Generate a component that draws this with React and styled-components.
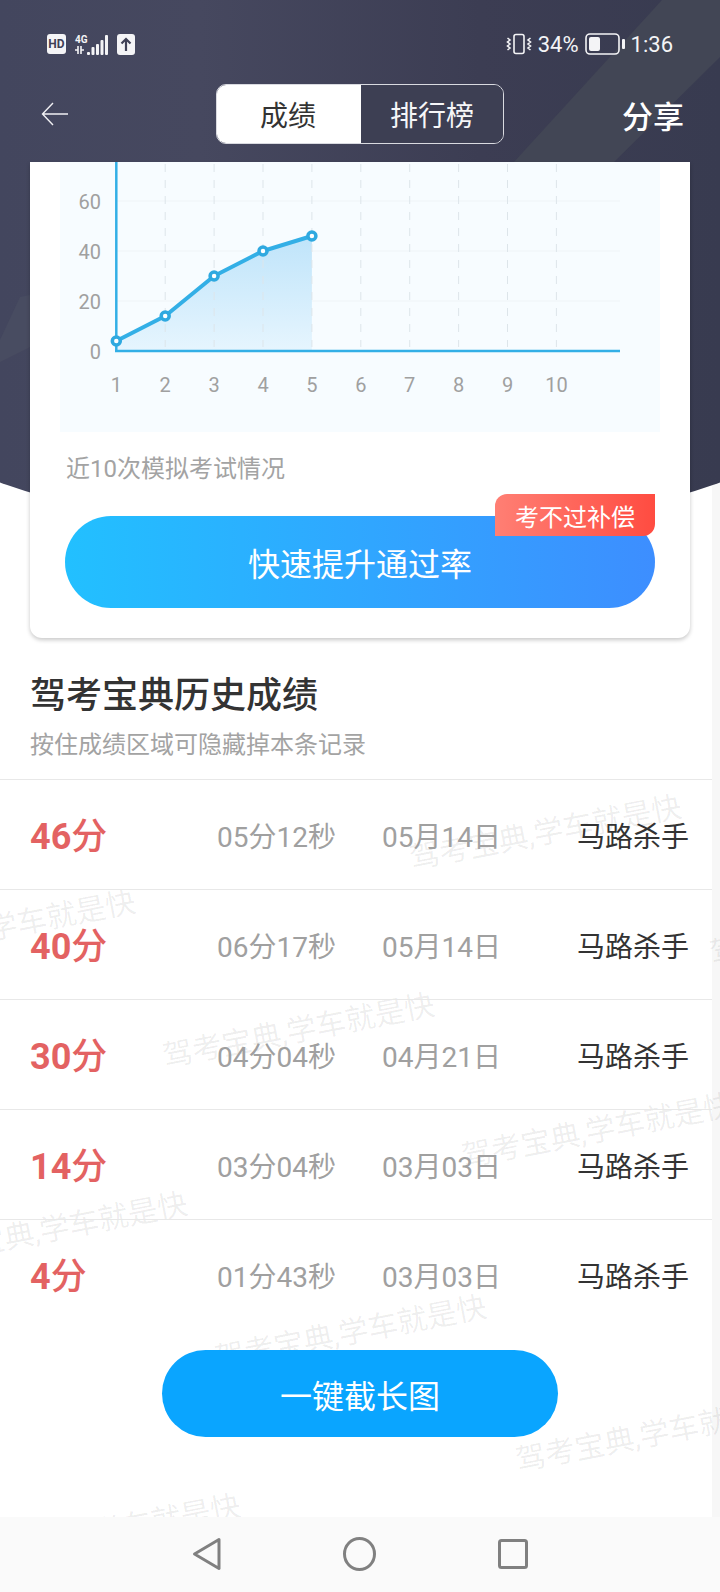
import styled, { createGlobalStyle } from "styled-components";

const GlobalStyle = createGlobalStyle`
  html, body {
    margin: 0;
    padding: 0;
    background: #fff;
  }
  * {
    box-sizing: border-box;
  }
`;

const Page = styled.div`
  position: relative;
  width: 720px;
  height: 1592px;
  overflow: hidden;
  display: flex;
  flex-direction: column;
  background: #fff;
  font-family: Roboto, "Noto Sans CJK SC", sans-serif;
`;

const ScrollTrack = styled.div`
  position: absolute;
  top: 470px;
  right: 0;
  bottom: 75px;
  width: 8px;
  background: #f7f7f7;
`;

const Backdrop = styled.div`
  position: absolute;
  top: 0;
  left: -140px;
  width: 1000px;
  height: 536px;
  border-radius: 0 0 500px 500px / 0 0 175px 175px;
  overflow: hidden;
  background: linear-gradient(90deg, #43465e 14%, #46485f 34%, #3c3d53 62%, #383b50 86%);

  &::before {
    content: "";
    position: absolute;
    top: 0;
    left: 140px;
    width: 720px;
    height: 536px;
    background: #424655;
    clip-path: polygon(662px 0, 720px 0, 720px 57px, 613px 163px, 513px 163px);
  }

  &::after {
    content: "";
    position: absolute;
    top: 0;
    left: 140px;
    width: 720px;
    height: 536px;
    background: #484c61;
    clip-path: polygon(20px 297px, 30px 295px, 30px 347px, 0 362px, 0 340px);
  }
`;

const Watermarks = styled.div`
  position: absolute;
  inset: 0;
  pointer-events: none;
`;

const Watermark = styled.span`
  position: absolute;
  left: ${(p) => p.$x}px;
  top: ${(p) => p.$y}px;
  transform: translate(-50%, -50%) rotate(-11deg);
  font-size: 30px;
  white-space: nowrap;
  color: rgba(0, 0, 0, 0.07);
`;

const StatusBar = styled.div`
  position: relative;
  height: 84px;
  padding: 33px 47px 0 47px;
  display: flex;
  justify-content: space-between;
  align-items: flex-start;
  color: #f4f4f6;
`;

const StatusGroup = styled.div`
  display: flex;
  align-items: center;
  height: 22px;
  gap: ${(p) => p.$gap}px;
  font-size: 22px;
`;

const HdBadge = styled.span`
  width: 19px;
  height: 20px;
  border-radius: 3px;
  background: #f4f4f6;
  color: #3f4156;
  font-size: 12px;
  font-weight: 700;
  line-height: 20px;
  text-align: center;
`;

const NetStack = styled.div`
  display: flex;
  flex-direction: column;
  width: 11px;
  margin-right: -9px;
  font-size: 10px;
  font-weight: 700;
  line-height: 12px;
  white-space: nowrap;
`;

const NavBar = styled.div`
  position: relative;
  height: 60px;
  padding: 0 36px;
  display: grid;
  grid-template-columns: 1fr auto 1fr;
  align-items: center;
`;

const BackButton = styled.div`
  display: flex;
  align-items: center;
  padding-left: 5px;
`;

const Tabs = styled.div`
  display: flex;
  width: 288px;
  height: 60px;
  border: 1px solid #d9dae0;
  border-radius: 10px;
  overflow: hidden;
`;

const Tab = styled.div`
  width: ${(p) => (p.$active ? 145 : 143)}px;
  padding-right: ${(p) => (p.$active ? 2 : 0)}px;
  display: flex;
  align-items: center;
  justify-content: center;
  font-size: 28px;
  background: ${(p) => (p.$active ? "#fff" : "#3d3f53")};
  color: ${(p) => (p.$active ? "#333" : "#f6f6f8")};
`;

const Share = styled.div`
  justify-self: end;
  font-size: 31px;
  font-weight: 500;
  color: #fff;
`;

const Scroll = styled.div`
  position: relative;
  flex: 1;
  margin-top: 18px;
  min-height: 0;
`;

const Card = styled.section`
  position: relative;
  width: 660px;
  margin: 0 auto;
  padding: 0 30px 30px;
  background: #fff;
  border-radius: 0 0 12px 12px;
  box-shadow: 0 2px 4px rgba(0, 0, 0, 0.22);
`;

const ChartPanel = styled.div`
  height: 270px;
  background: #f7fcff;
`;

const Caption = styled.div`
  margin-top: 20px;
  padding-left: 6px;
  font-size: 24px;
  line-height: 34px;
  color: #a3a3a3;
`;

const BoostButton = styled.div`
  position: relative;
  height: 92px;
  margin: 30px 5px 0;
  border-radius: 46px;
  background: linear-gradient(90deg, #22c0ff, #3d8eff);
  display: flex;
  align-items: center;
  justify-content: center;
  font-size: 32px;
  color: #fff;
`;

const Badge = styled.span`
  position: absolute;
  top: -22px;
  right: 0;
  width: 160px;
  height: 42px;
  border-radius: 12px 0 12px 0;
  background: linear-gradient(90deg, #ff7f74, #ff4c41);
  display: flex;
  align-items: center;
  justify-content: center;
  font-size: 24px;
  color: #fff;
`;

const History = styled.section`
  position: relative;
`;

const Title = styled.h2`
  margin: 33px 0 0 30px;
  font-size: 36px;
  font-weight: 500;
  line-height: 50px;
  color: #333;
`;

const Subtitle = styled.div`
  margin: 7px 0 17px 30px;
  font-size: 24px;
  line-height: 34px;
  color: #a3a3a3;
`;

const Row = styled.div`
  width: 712px;
  height: 110px;
  padding: 0 23px 0 30px;
  border-top: 1px solid #e8e8e8;
  display: grid;
  grid-template-columns: 187px 165px 1fr auto;
  align-items: center;
  font-size: 28px;
`;

const Score = styled.span`
  padding-bottom: 3px;
  font-size: 36px;
  font-weight: 700;
  color: #e36262;

  small {
    font-size: 36px;
    font-weight: 500;
  }
`;

const Muted = styled.span`
  color: #a0a0a0;
`;

const Name = styled.span`
  color: #333;
`;

const LongShot = styled.div`
  position: relative;
  width: 396px;
  height: 87px;
  margin: 21px auto 0;
  border-radius: 44px;
  background: #0aa5ff;
  display: flex;
  align-items: center;
  justify-content: center;
  font-size: 32px;
  color: #fff;
`;

const SystemNav = styled.nav`
  position: relative;
  height: 75px;
  padding: 0 0 2px 192px;
  background: #fafafa;
  display: flex;
  align-items: center;
  gap: 122px;
`;

const scores = [4, 14, 30, 40, 46];
const xAt = (i) => 56.3 + i * 48.9;
const yAt = (v) => 189 - v * 2.5;

const Chart = () => {
  const points = scores.map((v, i) => `${xAt(i)},${yAt(v)}`).join(" ");
  const area = `${xAt(0)},189 ${points} ${xAt(4)},189`;
  return (
    <svg width="600" height="270" viewBox="0 0 600 270" style={{ display: "block" }}>
      <defs>
        <linearGradient id="area" x1="0" y1="0" x2="0" y2="1">
          <stop offset="0" stopColor="#bfe4fa" />
          <stop offset="1" stopColor="#e6f5fe" />
        </linearGradient>
      </defs>
      {[60, 40, 20].map((v) => (
        <line key={v} x1="56" x2="560" y1={yAt(v)} y2={yAt(v)} stroke="#eff4f7" strokeWidth="1" />
      ))}
      <polygon points={area} fill="url(#area)" />
      {[1, 2, 3, 4, 5, 6, 7, 8, 9].map((i) => (
        <line
          key={i}
          x1={xAt(i)}
          x2={xAt(i)}
          y1="2"
          y2="185"
          stroke="#dde5ea"
          strokeWidth="1"
          strokeDasharray="8 8"
        />
      ))}
      <line x1={xAt(0)} x2={xAt(0)} y1="0" y2="190" stroke="#33afe6" strokeWidth="2.500" />
      <line x1="55" x2="560" y1="189" y2="189" stroke="#33afe6" strokeWidth="2.500" />
      <polyline points={points} fill="none" stroke="#33afe6" strokeWidth="4" strokeLinejoin="round" />
      {scores.map((v, i) => (
        <circle key={i} cx={xAt(i)} cy={yAt(v)} r="4" fill="#fff" stroke="#2fa9e0" strokeWidth="3.500" />
      ))}
      <g fontFamily="Roboto, sans-serif" fontSize="20" fill="#a0a0a0">
        {[60, 40, 20, 0].map((v) => (
          <text key={v} x="41" y={yAt(v) + 8} textAnchor="end">
            {v}
          </text>
        ))}
        {[1, 2, 3, 4, 5, 6, 7, 8, 9, 10].map((n, i) => (
          <text key={n} x={xAt(i)} y="230" textAnchor="middle">
            {n}
          </text>
        ))}
      </g>
    </svg>
  );
};

const records = [
  { score: 46, time: "05分12秒", date: "05月14日" },
  { score: 40, time: "06分17秒", date: "05月14日" },
  { score: 30, time: "04分04秒", date: "04月21日" },
  { score: 14, time: "03分04秒", date: "03月03日" },
  { score: 4, time: "01分43秒", date: "03月03日" },
];

const marks = [
  [545, 830],
  [-1, 925],
  [845, 925],
  [298, 1028],
  [597, 1128],
  [51, 1227],
  [350, 1330],
  [651, 1432],
  [104, 1529],
];

const App = () => (
  <Page>
    <GlobalStyle />
    <ScrollTrack />
    <Backdrop />
    <Watermarks>
      {marks.map(([x, y]) => (
        <Watermark key={`${x}-${y}`} $x={x} $y={y}>
          驾考宝典,学车就是快
        </Watermark>
      ))}
    </Watermarks>

    <StatusBar>
      <StatusGroup $gap={9}>
        <HdBadge>HD</HdBadge>
        <NetStack>
          <span>4G</span>
          <svg width="11" height="8" viewBox="0 0 11 8">
            <path d="M3 0v8M0 4h3M6 0v8M6 4h3" stroke="#f4f4f6" strokeWidth="1.600" fill="none" />
          </svg>
        </NetStack>
        <svg width="22" height="21" viewBox="0 0 22 21">
          <g fill="#f4f4f6">
            <rect x="1" y="18" width="3" height="3" rx="1" />
            <rect x="5.500" y="13" width="3" height="8" rx="1" />
            <rect x="10" y="10" width="3" height="11" rx="1" />
            <rect x="14.500" y="6" width="3" height="15" rx="1" />
            <rect x="19" y="1" width="3" height="20" rx="1" />
          </g>
        </svg>
        <svg width="18" height="21" viewBox="0 0 18 21">
          <rect width="18" height="21" rx="3" fill="#f4f4f6" />
          <path d="M9 17V5M4.500 9.500L9 5l4.500 4.500" stroke="#3f4156" strokeWidth="2.200" fill="none" />
        </svg>
      </StatusGroup>
      <StatusGroup $gap={6}>
        <svg width="26" height="22" viewBox="0 0 26 22">
          <rect x="8" y="1.500" width="10" height="19" rx="2" fill="none" stroke="#f4f4f6" strokeWidth="1.600" />
          <path
            d="M1.500 5l2.500 2-2.500 2 2.500 2-2.500 2 2.500 2-2.500 2M24.500 5l-2.500 2 2.500 2-2.500 2 2.500 2-2.500 2 2.500 2"
            fill="none"
            stroke="#f4f4f6"
            strokeWidth="1.600"
          />
        </svg>
        <span>34%</span>
        <svg width="40" height="22" viewBox="0 0 40 22">
          <rect x="1" y="1" width="33" height="20" rx="4" fill="none" stroke="#f4f4f6" strokeWidth="1.600" />
          <rect x="4" y="4" width="11" height="14" rx="2" fill="#f4f4f6" />
          <rect x="37" y="6" width="3" height="10" rx="1" fill="#f4f4f6" />
        </svg>
        <span>1:36</span>
      </StatusGroup>
    </StatusBar>

    <NavBar>
      <BackButton>
        <svg width="28" height="24" viewBox="0 0 28 24">
          <path d="M27 12H1.500M12 1L1.500 12 12 23" fill="none" stroke="#f0f0f3" strokeWidth="1.400" />
        </svg>
      </BackButton>
      <Tabs>
        <Tab $active>成绩</Tab>
        <Tab>排行榜</Tab>
      </Tabs>
      <Share>分享</Share>
    </NavBar>

    <Scroll>
      <Card>
        <ChartPanel>
          <Chart />
        </ChartPanel>
        <Caption>近10次模拟考试情况</Caption>
        <BoostButton>
          快速提升通过率
          <Badge>考不过补偿</Badge>
        </BoostButton>
      </Card>

      <History>
        <Title>驾考宝典历史成绩</Title>
        <Subtitle>按住成绩区域可隐藏掉本条记录</Subtitle>
        {records.map((r) => (
          <Row key={r.score}>
            <Score>
              {r.score}
              <small>分</small>
            </Score>
            <Muted>{r.time}</Muted>
            <Muted>{r.date}</Muted>
            <Name>马路杀手</Name>
          </Row>
        ))}
      </History>

      <LongShot>一键截长图</LongShot>
    </Scroll>

    <SystemNav>
      <svg width="29" height="34" viewBox="0 0 29 34">
        <path d="M27 2.500L2.500 17 27 31.500z" fill="none" stroke="#808080" strokeWidth="3" strokeLinejoin="round" />
      </svg>
      <svg width="33" height="34" viewBox="0 0 33 34">
        <ellipse cx="16.500" cy="17" rx="15" ry="15.500" fill="none" stroke="#808080" strokeWidth="3" />
      </svg>
      <svg width="30" height="30" viewBox="0 0 30 30">
        <rect x="1.500" y="1.500" width="27" height="27" rx="2" fill="none" stroke="#808080" strokeWidth="3" />
      </svg>
    </SystemNav>
  </Page>
);

export default App;
